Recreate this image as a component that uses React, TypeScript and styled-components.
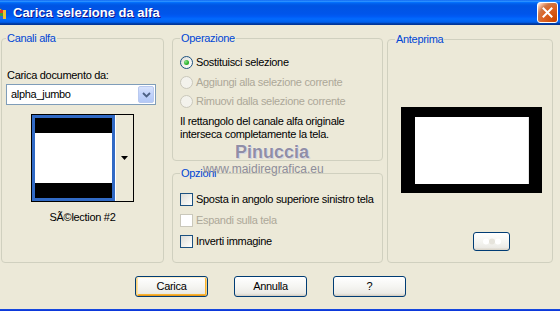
import React from "react";
import styled, { createGlobalStyle } from "styled-components";

const GlobalStyle = createGlobalStyle`
  html, body { margin: 0; padding: 0; background: #ECE9D8; }
  body { font-family: "Liberation Sans", Arial, sans-serif; }
  * { box-sizing: border-box; }
`;

const Window = styled.div`
  position: relative;
  width: 560px;
  height: 311px;
  overflow: hidden;
  display: flex;
  flex-direction: column;
  background: #ece9d8;
  font-family: "Liberation Sans", Arial, sans-serif;
  font-size: 11px;
  letter-spacing: -0.3px;
  color: #000;
`;

const TitleBar = styled.header`
  flex: none;
  height: 25px;
  display: flex;
  align-items: center;
  padding-right: 2px;
  background: linear-gradient(
    180deg,
    #0058ee 0%,
    #3593ff 4%,
    #288eff 6%,
    #127dff 8%,
    #036ffc 10%,
    #0262ee 14%,
    #0057e5 20%,
    #0054e3 24%,
    #0055eb 56%,
    #005bf5 66%,
    #026afe 76%,
    #0062ef 86%,
    #0052d6 92%,
    #0040ab 94%,
    #003092 100%
  );
`;

const AppIcon = styled.svg`
  flex: none;
  margin-left: -10px;
  margin-right: 7px;
`;

const TitleText = styled.h1`
  flex: 1;
  margin: 0;
  font-family: "Liberation Sans", Arial, sans-serif;
  font-size: 13px;
  font-weight: bold;
  letter-spacing: 0;
  color: #fff;
  text-shadow: 1px 1px #0f1089;
  line-height: 25px;
`;

const CloseButton = styled.div`
  flex: none;
  width: 21px;
  height: 21px;
  border: 1px solid #fff;
  border-radius: 3px;
  display: flex;
  align-items: center;
  justify-content: center;
  background: radial-gradient(
    circle at 90% 90%,
    #cc4600 0%,
    #dc6527 55%,
    #cd7546 70%,
    #ffccb2 90%,
    #ffffff 100%
  );
`;

const Main = styled.main`
  flex: 1;
  display: flex;
  flex-direction: column;
  padding: 13px 0 0 1px;
`;

const Panels = styled.div`
  display: flex;
  align-items: flex-start;
  height: 225px;
`;

const Group = styled.section`
  position: relative;
  border: 1px solid #d0d0bf;
  border-radius: 4px;
  display: flex;
  flex-direction: column;
`;

const Legend = styled.span<{ $left: number }>`
  position: absolute;
  top: -7px;
  left: ${(p) => p.$left}px;
  padding: 0 1px;
  line-height: 13px;
  background: #ece9d8;
  color: #0046d5;
  white-space: nowrap;
`;

const ChannelGroup = styled(Group)`
  width: 163px;
  height: 225px;
  padding: 30px 4px 0 4px;
`;

const FieldLabel = styled.div`
  line-height: 13px;
  margin-left: 1px;
  white-space: nowrap;
`;

const Select = styled.div`
  margin-top: 2px;
  width: 150px;
  height: 21px;
  border: 1px solid #7f9db9;
  background: #fff;
  display: flex;
  align-items: center;
  justify-content: space-between;
  padding: 0 0 0 4px;
`;

const SelectValue = styled.span`
  line-height: 13px;
`;

const SelectArrow = styled.div`
  width: 16px;
  height: 17px;
  margin-right: 1px;
  border: 1px solid #b9c9ef;
  border-radius: 2px;
  background: linear-gradient(180deg, #d8e3fc 0%, #c2d3fb 45%, #b3c8f6 100%);
  display: flex;
  align-items: center;
  justify-content: center;
`;

const Thumb = styled.div`
  align-self: center;
  margin-top: 9px;
  width: 103px;
  height: 88px;
  border: 1px solid #000;
  display: flex;
`;

const ThumbFrame = styled.div`
  width: 83px;
  height: 86px;
  border: 3px solid #316ac5;
  display: flex;
  flex-direction: column;
  background: #fff;
`;

const Band = styled.div<{ $h: number; $dark?: boolean }>`
  height: ${(p) => p.$h}px;
  flex: none;
  background: ${(p) => (p.$dark ? "#000" : "#fff")};
`;

const ThumbArrow = styled.div`
  flex: 1;
  border-left: 1px solid #fff;
  background: #ece9d8;
  display: flex;
  align-items: center;
  justify-content: center;
`;

const Caption = styled.div`
  margin-top: 9px;
  line-height: 13px;
  text-align: center;
`;

const Stack = styled.div`
  width: 211px;
  margin-left: 8px;
  display: flex;
  flex-direction: column;
  gap: 12px;
`;

const OperationGroup = styled(Group)`
  height: 123px;
  padding: 17px 0 0 7px;
`;

const OptionsGroup = styled(Group)`
  height: 90px;
  padding: 19px 0 0 7px;
`;

const ChoiceList = styled.div<{ $gap: number }>`
  display: flex;
  flex-direction: column;
  gap: ${(p) => p.$gap}px;
`;

const Choice = styled.div<{ $disabled?: boolean }>`
  display: flex;
  align-items: center;
  gap: 3px;
  height: 13px;
  line-height: 13px;
  white-space: nowrap;
  color: ${(p) => (p.$disabled ? "#aca899" : "#000")};
`;

const Radio = styled.span<{ $disabled?: boolean; $checked?: boolean }>`
  flex: none;
  width: 13px;
  height: 13px;
  border-radius: 50%;
  border: 1px solid ${(p) => (p.$disabled ? "#cac8bb" : "#1c5180")};
  background: ${(p) =>
    p.$disabled
      ? "#f3f2ec"
      : "linear-gradient(135deg, #dcdcd7 0%, #f4f4f0 60%, #ffffff 100%)"};
  display: flex;
  align-items: center;
  justify-content: center;
  &::after {
    content: "";
    display: ${(p) => (p.$checked ? "block" : "none")};
    width: 5px;
    height: 5px;
    border-radius: 50%;
    background: radial-gradient(circle at 35% 35%, #8be38b 0%, #2fb52f 55%, #1d8f1d 100%);
  }
`;

const Checkbox = styled.span<{ $disabled?: boolean }>`
  flex: none;
  width: 13px;
  height: 13px;
  border: 1px solid ${(p) => (p.$disabled ? "#cac8bb" : "#1c5180")};
  background: ${(p) =>
    p.$disabled
      ? "#ffffff"
      : "linear-gradient(135deg, #dcdcd7 0%, #f2f2ee 60%, #ffffff 100%)"};
`;

const Note = styled.p`
  margin: 7px 0 0 0;
  line-height: 13px;
  white-space: nowrap;
`;

const PreviewGroup = styled(Group)`
  width: 166px;
  height: 224px;
  margin-left: 4px;
  margin-top: 1px;
  padding: 67px 0 0 13px;
`;

const PreviewCanvas = styled.div`
  width: 141px;
  height: 86px;
  background: #000;
  padding: 10px 13px 9px 14px;
`;

const PreviewSheet = styled.div`
  width: 114px;
  height: 67px;
  background: #fff;
  box-shadow: inset -1px 0 0 #e4e4e4;
`;

const SmallButton = styled.div`
  margin: 39px 0 0 72px;
  width: 37px;
  height: 19px;
  border: 1px solid #003c74;
  border-radius: 3px;
  background: linear-gradient(180deg, #ffffff 0%, #f4f4f0 55%, #ecebe6 85%, #d8d2c6 100%);
  display: flex;
  align-items: center;
  justify-content: center;
`;

const ButtonRow = styled.div`
  display: flex;
  gap: 26px;
  margin-top: 13px;
  padding-left: 134px;
`;

const Button = styled.div<{ $default?: boolean }>`
  width: 73px;
  height: 21px;
  border: 1px solid #003c74;
  border-radius: 3px;
  display: flex;
  align-items: center;
  justify-content: center;
  line-height: 13px;
  background: linear-gradient(180deg, #ffffff 0%, #f5f5f2 50%, #ecebe6 85%, #d6d0c5 100%);
  box-shadow: ${(p) =>
    p.$default
      ? "inset 0 1px 0 #ffefc9, inset 1px 0 0 #fbd27a, inset -1px 0 0 #fbd27a, inset 0 -1px 0 #e5971f, inset 2px 0 0 #fce2a6, inset -2px 0 0 #f8b330, inset 0 -2px 0 #f8b330"
      : "inset 0 -1px 0 #d6d0c5"};
`;

const BottomEdge = styled.div`
  flex: none;
  height: 2px;
  background: linear-gradient(180deg, #1a4fe0 0%, #0831d9 100%);
`;

const Watermark = styled.div`
  position: absolute;
  left: 235px;
  top: 143px;
  font-family: "Liberation Sans", Arial, sans-serif;
  font-weight: bold;
  font-size: 18px;
  line-height: 18px;
  letter-spacing: 0;
  color: #908ea6;
  text-shadow: 0 0 1px #ffffff, 1px 1px 0 #d4d2dc;
  pointer-events: none;
`;

const WatermarkUrl = styled.div`
  position: absolute;
  left: 203px;
  top: 163px;
  font-family: "Liberation Sans", Arial, sans-serif;
  font-size: 12px;
  line-height: 12px;
  letter-spacing: 0;
  color: #8e8d9a;
  pointer-events: none;
`;

export default function App() {
  return (
    <>
      <GlobalStyle />
      <Window>
        <TitleBar>
          <AppIcon width="16" height="16" viewBox="0 0 16 16">
            <path d="M2 13 L9 3 L12 5 L5 14 Z" fill="#f0e6c8" stroke="#7a5a20" strokeWidth="0.8" />
            <rect x="10" y="5" width="3" height="3" fill="#e03a2a" />
            <rect x="10" y="8" width="3" height="3" fill="#3aa03a" />
            <rect x="10" y="11" width="3" height="3" fill="#2a6ae0" />
            <rect x="13" y="5" width="3" height="9" fill="#f0c030" />
          </AppIcon>
          <TitleText>Carica selezione da alfa</TitleText>
          <CloseButton>
            <svg width="11" height="11" viewBox="0 0 11 11">
              <path d="M1.5 1.5 L9.5 9.5 M9.5 1.5 L1.5 9.5" stroke="#fff" strokeWidth="2" strokeLinecap="square" />
            </svg>
          </CloseButton>
        </TitleBar>

        <Main>
          <Panels>
            <ChannelGroup>
              <Legend $left={4}>Canali alfa</Legend>
              <FieldLabel>Carica documento da:</FieldLabel>
              <Select>
                <SelectValue>alpha_jumbo</SelectValue>
                <SelectArrow>
                  <svg width="9" height="6" viewBox="0 0 9 6">
                    <path d="M1 1 L4.5 4.5 L8 1" fill="none" stroke="#4d6185" strokeWidth="1.8" />
                  </svg>
                </SelectArrow>
              </Select>
              <Thumb>
                <ThumbFrame>
                  <Band $h={15} $dark />
                  <Band $h={50} />
                  <Band $h={15} $dark />
                </ThumbFrame>
                <ThumbArrow>
                  <svg width="7" height="4" viewBox="0 0 7 4">
                    <path d="M0 0 H7 L3.5 4 Z" fill="#000" />
                  </svg>
                </ThumbArrow>
              </Thumb>
              <Caption>SÃ©lection #2</Caption>
            </ChannelGroup>

            <Stack>
              <OperationGroup>
                <Legend $left={7}>Operazione</Legend>
                <ChoiceList $gap={6.5}>
                  <Choice>
                    <Radio $checked />
                    Sostituisci selezione
                  </Choice>
                  <Choice $disabled>
                    <Radio $disabled />
                    Aggiungi alla selezione corrente
                  </Choice>
                  <Choice $disabled>
                    <Radio $disabled />
                    Rimuovi dalla selezione corrente
                  </Choice>
                </ChoiceList>
                <Note>
                  Il rettangolo del canale alfa originale
                  <br />
                  interseca completamente la tela.
                </Note>
              </OperationGroup>

              <OptionsGroup>
                <Legend $left={7}>Opzioni</Legend>
                <ChoiceList $gap={8}>
                  <Choice>
                    <Checkbox />
                    Sposta in angolo superiore sinistro tela
                  </Choice>
                  <Choice $disabled>
                    <Checkbox $disabled />
                    Espandi sulla tela
                  </Choice>
                  <Choice>
                    <Checkbox />
                    Inverti immagine
                  </Choice>
                </ChoiceList>
              </OptionsGroup>
            </Stack>

            <PreviewGroup>
              <Legend $left={7}>Anteprima</Legend>
              <PreviewCanvas>
                <PreviewSheet />
              </PreviewCanvas>
              <SmallButton>
                <svg width="22" height="11" viewBox="0 0 22 11">
                  <circle cx="5" cy="5.5" r="3" fill="#ffffff" />
                  <circle cx="11" cy="5.5" r="3" fill="#e6e4dc" />
                  <circle cx="17" cy="5.5" r="3" fill="#ffffff" />
                </svg>
              </SmallButton>
            </PreviewGroup>
          </Panels>

          <ButtonRow>
            <Button $default>Carica</Button>
            <Button>Annulla</Button>
            <Button>?</Button>
          </ButtonRow>
        </Main>

        <BottomEdge />

        <Watermark>Pinuccia</Watermark>
        <WatermarkUrl>www.maidiregrafica.eu</WatermarkUrl>
      </Window>
    </>
  );
}
